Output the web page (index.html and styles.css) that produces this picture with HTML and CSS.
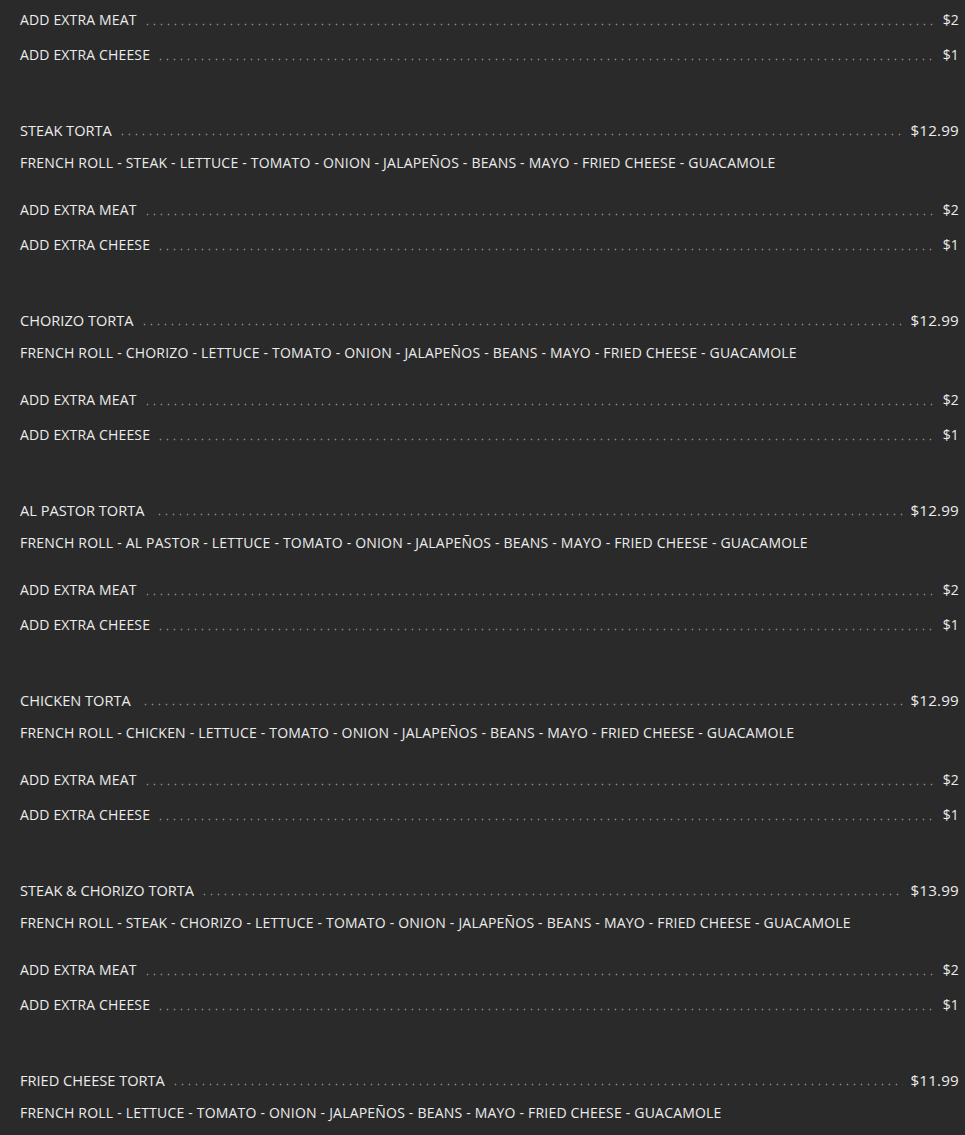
FILE: index.html
```html
<!DOCTYPE html>
<html lang="en">
<head>
<meta charset="utf-8">
<title>Tortas</title>
<link rel="stylesheet" href="styles.css">
</head>
<body>
<main class="menu">
  <section class="group">
    <div class="row addon"><span class="name">ADD EXTRA MEAT</span><span class="leader"></span><span class="price">$2</span></div>
    <div class="row addon"><span class="name">ADD EXTRA CHEESE</span><span class="leader"></span><span class="price">$1</span></div>
  </section>

  <section class="group">
    <div class="row title"><span class="name">STEAK TORTA</span><span class="leader"></span><span class="price">$12.99</span></div>
    <p class="desc">FRENCH ROLL - STEAK - LETTUCE - TOMATO - ONION - JALAPEÑOS - BEANS - MAYO - FRIED CHEESE - GUACAMOLE</p>
    <div class="row addon"><span class="name">ADD EXTRA MEAT</span><span class="leader"></span><span class="price">$2</span></div>
    <div class="row addon"><span class="name">ADD EXTRA CHEESE</span><span class="leader"></span><span class="price">$1</span></div>
  </section>

  <section class="group">
    <div class="row title"><span class="name">CHORIZO TORTA</span><span class="leader"></span><span class="price">$12.99</span></div>
    <p class="desc">FRENCH ROLL - CHORIZO - LETTUCE - TOMATO - ONION - JALAPEÑOS - BEANS - MAYO - FRIED CHEESE - GUACAMOLE</p>
    <div class="row addon"><span class="name">ADD EXTRA MEAT</span><span class="leader"></span><span class="price">$2</span></div>
    <div class="row addon"><span class="name">ADD EXTRA CHEESE</span><span class="leader"></span><span class="price">$1</span></div>
  </section>

  <section class="group">
    <div class="row title"><span class="name spaced">AL PASTOR TORTA</span><span class="leader"></span><span class="price">$12.99</span></div>
    <p class="desc">FRENCH ROLL - AL PASTOR - LETTUCE - TOMATO - ONION - JALAPEÑOS - BEANS - MAYO - FRIED CHEESE - GUACAMOLE</p>
    <div class="row addon"><span class="name">ADD EXTRA MEAT</span><span class="leader"></span><span class="price">$2</span></div>
    <div class="row addon"><span class="name">ADD EXTRA CHEESE</span><span class="leader"></span><span class="price">$1</span></div>
  </section>

  <section class="group">
    <div class="row title"><span class="name spaced">CHICKEN TORTA</span><span class="leader"></span><span class="price">$12.99</span></div>
    <p class="desc">FRENCH ROLL - CHICKEN - LETTUCE - TOMATO - ONION - JALAPEÑOS - BEANS - MAYO - FRIED CHEESE - GUACAMOLE</p>
    <div class="row addon"><span class="name">ADD EXTRA MEAT</span><span class="leader"></span><span class="price">$2</span></div>
    <div class="row addon"><span class="name">ADD EXTRA CHEESE</span><span class="leader"></span><span class="price">$1</span></div>
  </section>

  <section class="group">
    <div class="row title"><span class="name">STEAK &amp; CHORIZO TORTA</span><span class="leader"></span><span class="price">$13.99</span></div>
    <p class="desc">FRENCH ROLL - STEAK - CHORIZO - LETTUCE - TOMATO - ONION - JALAPEÑOS - BEANS - MAYO - FRIED CHEESE - GUACAMOLE</p>
    <div class="row addon"><span class="name">ADD EXTRA MEAT</span><span class="leader"></span><span class="price">$2</span></div>
    <div class="row addon"><span class="name">ADD EXTRA CHEESE</span><span class="leader"></span><span class="price">$1</span></div>
  </section>

  <section class="group">
    <div class="row title"><span class="name">FRIED CHEESE TORTA</span><span class="leader"></span><span class="price">$11.99</span></div>
    <p class="desc">FRENCH ROLL - LETTUCE - TOMATO - ONION - JALAPEÑOS - BEANS - MAYO - FRIED CHEESE - GUACAMOLE</p>
  </section>
</main>
</body>
</html>
```
FILE: styles.css
```css
html, body {
  margin: 0;
  padding: 0;
  background: #2a2a2a;
}

body {
  font-family: "Open Sans", "Liberation Sans", sans-serif;
  font-size: 14px;
  color: #ececec;
}

.menu {
  display: flex;
  flex-direction: column;
  gap: 55px;
  padding: 10px 6px 0 20px;
}

.group {
  display: flex;
  flex-direction: column;
  gap: 15px;
}

.row {
  display: flex;
  align-items: stretch;
  line-height: 20px;
  height: 20px;
}

.addon {
  letter-spacing: 0.15px;
}

.name {
  white-space: nowrap;
  padding-right: 7px;
}

.title .name {
  font-size: 14.6px;
}

.title .price {
  font-size: 15.2px;
  letter-spacing: 0.2px;
}

.name.spaced {
  padding-right: 11px;
}

.leader {
  flex: 1;
  background-image: radial-gradient(circle, #8a8a8a 0.75px, rgba(138,138,138,0) 1.1px);
  background-size: 7px 3px;
  background-repeat: repeat-x;
  background-position: 0 13px;
}

.price {
  white-space: nowrap;
  padding-left: 7px;
}

.title {
  margin-bottom: -2px;
}

.desc {
  margin: 0 0 12px 0;
  line-height: 20px;
  letter-spacing: 0.2px;
  white-space: nowrap;
}
```
